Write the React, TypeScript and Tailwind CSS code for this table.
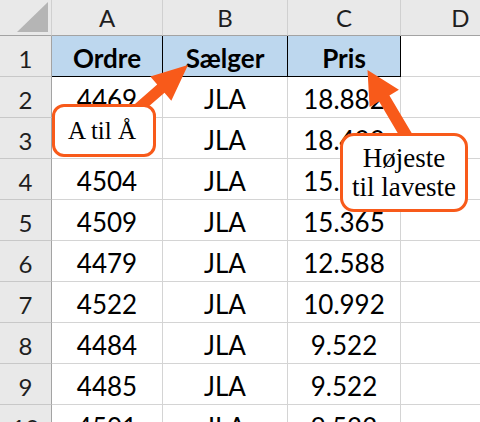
import React from "react";

const ORANGE = "#f85a1a";

const rows: [string, string, string][] = [
  ["4469", "JLA", "18.882"],
  ["4471", "JLA", "18.422"],
  ["4504", "JLA", "15.900"],
  ["4509", "JLA", "15.365"],
  ["4479", "JLA", "12.588"],
  ["4522", "JLA", "10.992"],
  ["4484", "JLA", "9.522"],
  ["4485", "JLA", "9.522"],
  ["4501", "JLA", "9.522"],
];

type P = [number, number];

function arrowPoints(tail: P, tip: P, sh: number, hl: number, hh: number): string {
  const dx = tip[0] - tail[0];
  const dy = tip[1] - tail[1];
  const len = Math.hypot(dx, dy);
  const ux = dx / len;
  const uy = dy / len;
  const nx = -uy;
  const ny = ux;
  const bx = tip[0] - ux * hl;
  const by = tip[1] - uy * hl;
  const pts: P[] = [
    [tail[0] + nx * sh, tail[1] + ny * sh],
    [bx + nx * sh, by + ny * sh],
    [bx + nx * hh, by + ny * hh],
    tip,
    [bx - nx * hh, by - ny * hh],
    [bx - nx * sh, by - ny * sh],
    [tail[0] - nx * sh, tail[1] - ny * sh],
  ];
  return pts.map((p) => `${p[0].toFixed(1)},${p[1].toFixed(1)}`).join(" ");
}

const hdrCell =
  "h-[36px] bg-[#e9e9e9] border-r border-b border-r-[#d0d0d0] border-b-[#a3a3a3] flex items-end justify-center pb-[5px] text-[24px] leading-none text-[#1f1f1f]";
const rowHdrCell =
  "h-[41px] bg-[#e9e9e9] border-r border-b border-r-[#a3a3a3] border-b-[#c8c8c8] flex items-end justify-center pb-[5px] text-[24px] leading-none text-[#1f1f1f]";
const bodyCell =
  "h-[41px] border-r border-b border-[#d4d4d4] flex items-end justify-center pb-[5px] text-[26px] leading-none text-black";
const titleCell =
  "h-[41px] bg-[#bdd7ee] border-r border-b border-black flex items-end justify-center pb-[5px] text-[26px] leading-none font-bold text-black";

export default function App() {
  return (
    <div className="relative w-[480px] h-[422px] overflow-hidden bg-white font-['Lato',sans-serif]">
      <div className="grid grid-cols-[52px_111px_125px_113px_120px]">
        <div className="relative h-[36px] bg-[#e9e9e9] border-r border-b border-r-[#d0d0d0] border-b-[#a3a3a3]">
          <svg className="absolute left-0 top-0" width="52" height="36">
            <polygon points="17,32 48,32 48,2" fill="#b5b5b5" />
          </svg>
        </div>
        <div className={hdrCell}>A</div>
        <div className={hdrCell}>B</div>
        <div className={hdrCell}>C</div>
        <div className={hdrCell}>D</div>

        <div className={rowHdrCell}>1</div>
        <div className={titleCell}>Ordre</div>
        <div className={titleCell}>Sælger</div>
        <div className={titleCell}>Pris</div>
        <div className={bodyCell}></div>

        {rows.map((r, i) => (
          <React.Fragment key={i}>
            <div className={rowHdrCell}>{i + 2}</div>
            <div className={bodyCell}>{r[0]}</div>
            <div className={bodyCell}>{r[1]}</div>
            <div className={bodyCell}>{r[2]}</div>
            <div className={bodyCell}></div>
          </React.Fragment>
        ))}
      </div>

      <svg className="absolute left-0 top-0 pointer-events-none" width="480" height="422">
        <polygon points={arrowPoints([134, 112], [188, 65], 5.5, 36, 16)} fill={ORANGE} />
        <polygon points={arrowPoints([410, 142], [367.5, 70], 6, 33, 17)} fill={ORANGE} />
      </svg>

      <div className="absolute left-[52px] top-[104px] w-[104px] h-[53px] rounded-[12px] border-[3px] border-[#f85a1a] bg-white flex items-center justify-center pr-[4px] font-['Liberation_Serif',serif] text-[25px] leading-none text-black">
        A til Å
      </div>
      <div className="absolute left-[340px] top-[133px] w-[128px] h-[79px] rounded-[14px] border-[3px] border-[#f85a1a] bg-white flex flex-col items-center justify-center font-['Liberation_Serif',serif] text-[27px] leading-[29px] text-black">
        <span>Højeste</span>
        <span>til laveste</span>
      </div>
    </div>
  );
}
